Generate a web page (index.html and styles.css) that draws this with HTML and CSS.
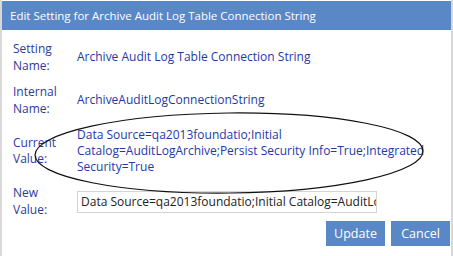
FILE: index.html
```html
<!DOCTYPE html>
<html>
<head>
<meta charset="utf-8">
<link rel="stylesheet" href="styles.css">
</head>
<body>
<div class="dialog">
  <div class="titlebar">Edit Setting for Archive Audit Log Table Connection String</div>
  <div class="content">
    <div class="form">
      <div class="label">Setting<br>Name:</div>
      <div class="value">Archive Audit Log Table Connection String</div>
      <div class="label">Internal<br>Name:</div>
      <div class="value">ArchiveAuditLogConnectionString</div>
      <div class="label">Current<br>Value:</div>
      <div class="value multi">Data Source=qa2013foundatio;Initial<br>Catalog=AuditLogArchive;Persist Security Info=True;Integrated<br>Security=True</div>
      <div class="label">New<br>Value:</div>
      <div class="value"><div class="input">Data Source=qa2013foundatio;Initial Catalog=AuditLogArchive;Persist Security Info=True;Integrated Security=True</div></div>
    </div>
    <div class="buttons">
      <div class="btn">Update</div>
      <div class="btn">Cancel</div>
    </div>
  </div>
  <svg class="ellipse" width="453" height="256" viewBox="0 0 453 256">
    <ellipse cx="229" cy="153" rx="194" ry="40" fill="none" stroke="#111" stroke-width="1.2" transform="rotate(-0.6 229 153)"/>
  </svg>
</div>
</body>
</html>
```
FILE: styles.css
```css
html, body {
  margin: 0;
  padding: 0;
  background: #fff;
}
.dialog {
  position: relative;
  width: 453px;
  height: 256px;
  box-sizing: border-box;
  border-left: 2px solid #d8d8d8;
  border-right: 2px solid #d8d8d8;
  font-family: "Open Sans", "Noto Sans", sans-serif;
  font-size: 12px;
  overflow: hidden;
}
.titlebar {
  margin-top: 1px;
  height: 29px;
  background: #5a87c5;
  color: #fff;
  font-size: 11.5px;
  line-height: 29px;
  padding-left: 8px;
  white-space: nowrap;
}
.content {
  padding: 11px 1px 0 11px;
}
.form {
  display: grid;
  grid-template-columns: 64px 1fr;
  row-gap: 10px;
  align-items: center;
}
.label {
  color: #2e3a9a;
  line-height: 16.5px;
}
.value {
  color: #1d3aa6;
  line-height: 16.5px;
  white-space: nowrap;
}
.multi {
  line-height: 16px;
}
.input {
  width: 300px;
  height: 22px;
  box-sizing: border-box;
  border: 1px solid #d4d4d4;
  color: #222;
  padding: 0 3px;
  line-height: 20px;
  overflow: hidden;
  white-space: nowrap;
}
.buttons {
  display: flex;
  justify-content: flex-end;
  gap: 6px;
  margin-top: 3px;
}
.btn {
  width: 59px;
  height: 25px;
  background: #5a87c5;
  color: #fff;
  line-height: 25px;
  text-align: center;
  font-size: 12.5px;
}
.ellipse {
  position: absolute;
  left: -2px;
  top: 0;
  pointer-events: none;
}
```
